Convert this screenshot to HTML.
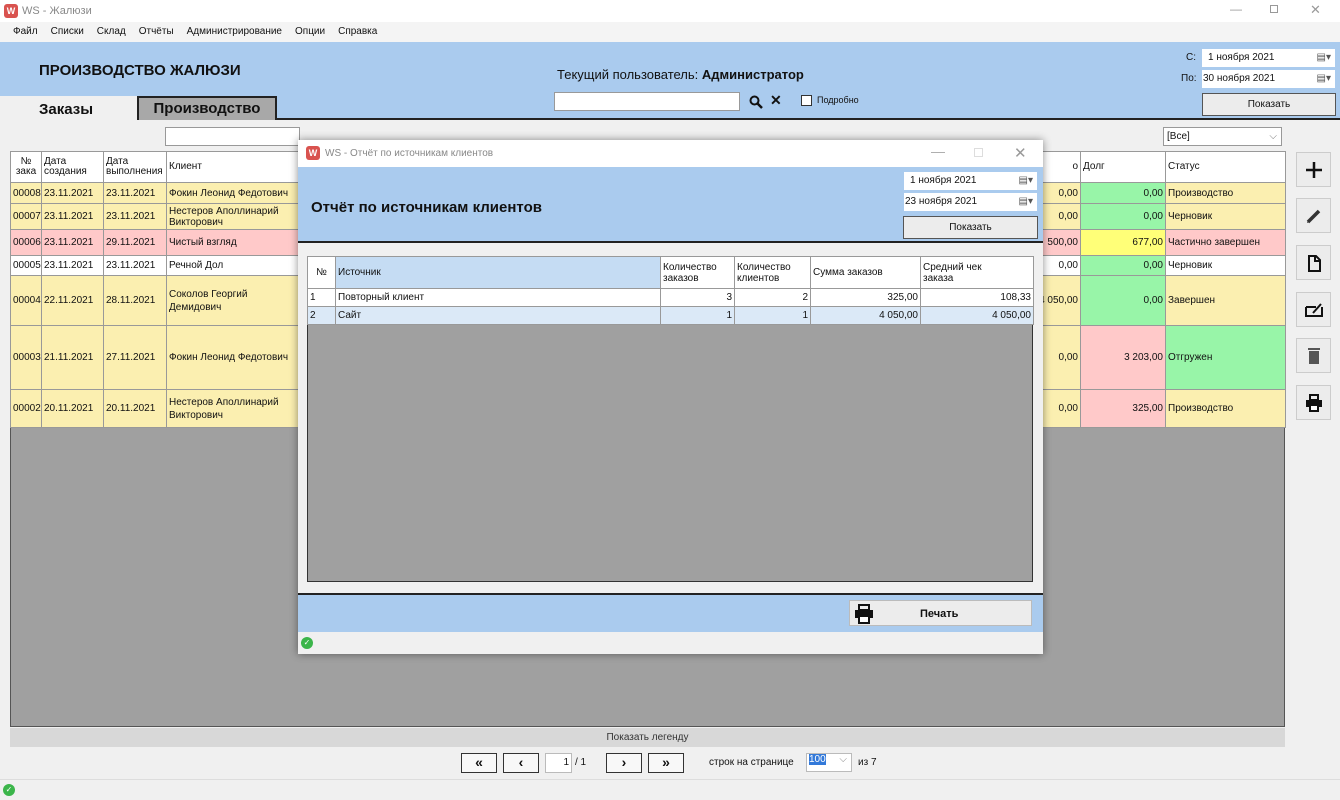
<!DOCTYPE html>
<html><head><meta charset="utf-8"><style>
*{box-sizing:border-box;margin:0;padding:0}
body{width:1340px;height:800px;position:relative;overflow:hidden;background:#f0f0f0;font-family:"Liberation Sans",sans-serif;font-size:11px;color:#111}
.a{position:absolute}
.title{left:0;top:0;width:1340px;height:22px;background:#fff}
.logo{width:14px;height:14px;background:#d9534f;border-radius:3px;color:#fff;font-size:9px;font-weight:bold;text-align:center;line-height:14px}
.menu{left:0;top:22px;width:1340px;height:20px;background:#f4f4f4;font-size:10px}
.menu span{margin-left:13px;line-height:20px}
.hdr{left:0;top:42px;width:1340px;height:78px;background:#aacbee;border-bottom:2px solid #222}
.date{background:#fff;height:18px;font-size:10px;line-height:18px;padding-left:6px}
.btn{background:#ececec;border:1px solid #555;text-align:center;font-size:11px}
table{border-collapse:collapse;table-layout:fixed}
td{border:1px solid #999;padding:0 2px;font-size:10px;overflow:hidden;white-space:nowrap}
.y{background:#fbefb0}.p{background:#ffc9c9}.g{background:#98f5a8}.w{background:#fff}.by{background:#ffff78}
.r{text-align:right}
.side{width:35px;height:35px;background:#ececec;border:1px solid #ccc;left:1296px}
.side svg{position:absolute;left:8px;top:8px}
.pg{height:20px;border:1px solid #333;background:#f8f8f8;text-align:center;font-weight:bold;font-size:14px;line-height:17px}
</style></head><body>
<div class="a title"><div class="a logo" style="left:4px;top:4px">W</div><span class="a" style="left:22px;top:5px;color:#888;font-size:11px">WS - Жалюзи</span>
<span class="a" style="left:1230px;top:2px;color:#999;font-size:12px">—</span><span class="a" style="left:1270px;top:5px;width:8px;height:8px;border:1px solid #999"></span><span class="a" style="left:1310px;top:2px;color:#999;font-size:13px">✕</span></div>
<div class="a menu"><span>Файл</span><span>Списки</span><span>Склад</span><span>Отчёты</span><span>Администрирование</span><span>Опции</span><span>Справка</span></div>
<div class="a hdr">
<div class="a" style="left:39px;top:20px;font-size:15px;font-weight:bold">ПРОИЗВОДСТВО ЖАЛЮЗИ</div>
<div class="a" style="left:557px;top:25px;font-size:13px">Текущий пользователь: <b>Администратор</b></div>
<div class="a" style="left:554px;top:50px;width:186px;height:19px;background:#fff;border:1px solid #999"></div>
<svg class="a" style="left:749px;top:53px" width="14" height="14"><circle cx="5.5" cy="5.5" r="4" fill="none" stroke="#111" stroke-width="2"/><path d="M8.5 8.5L13 13" stroke="#111" stroke-width="2.5"/></svg>
<div class="a" style="left:770px;top:50px;font-size:14px;font-weight:bold">✕</div>
<div class="a" style="left:801px;top:53px;width:11px;height:11px;background:#fff;border:1px solid #333"></div>
<div class="a" style="left:817px;top:53px;font-size:9px">Подробно</div>
<div class="a" style="left:1186px;top:10px;font-size:10px">С:</div>
<div class="a date" style="left:1202px;top:7px;width:133px">1 ноября 2021<span style="float:right;margin-right:4px;color:#555">▤▾</span></div>
<div class="a" style="left:1181px;top:31px;font-size:10px">По:</div>
<div class="a date" style="left:1202px;top:28px;width:133px;padding-left:1px">30 ноября 2021<span style="float:right;margin-right:4px;color:#555">▤▾</span></div>
<div class="a btn" style="left:1202px;top:51px;width:134px;height:23px;line-height:21px;font-size:10px">Показать</div>
<div class="a" style="left:0;top:54px;width:137px;height:24px;background:#f0f0f0;font-size:15px;font-weight:bold;padding-left:39px;line-height:28px">Заказы</div>
<div class="a" style="left:137px;top:54px;width:140px;height:24px;background:#a8a8a8;border:2px solid #222;border-bottom:none;font-size:15px;font-weight:bold;text-align:center;line-height:22px">Производство</div>
</div>
<div class="a" style="left:0;top:120px;width:137px;height:3px;background:#f0f0f0"></div>
<div class="a" style="left:165px;top:127px;width:135px;height:19px;background:#fff;border:1px solid #999"></div>
<div class="a" style="left:1163px;top:127px;width:119px;height:19px;background:#fff;border:1px solid #999;font-size:10px;line-height:17px;padding-left:3px">[Все]<span style="float:right;margin-right:4px;color:#777">⌵</span></div>
<div class="a" style="left:10px;top:151px;width:1275px;height:576px;background:#a0a0a0;border:1px solid #555"></div>
<table class="a" style="left:10px;top:151px;width:1275px">
<colgroup><col style="width:31px"><col style="width:62px"><col style="width:63px"><col style="width:132px"><col style="width:782px"><col style="width:85px"><col style="width:120px"></colgroup>
<tr class="w" style="height:31px;line-height:10px"><td style="text-align:center">№<br>зака</td><td>Дата<br>создания</td><td>Дата<br>выполнения</td><td>Клиент</td><td class="r">о</td><td>Долг</td><td>Статус</td></tr>
<tr class="y" style="height:21px"><td>00008</td><td>23.11.2021</td><td>23.11.2021</td><td>Фокин Леонид Федотович</td><td class="r">0,00</td><td class="r g">0,00</td><td>Производство</td></tr>
<tr class="y" style="height:26px;line-height:11px"><td>00007</td><td>23.11.2021</td><td>23.11.2021</td><td>Нестеров Аполлинарий<br>Викторович</td><td class="r">0,00</td><td class="r g">0,00</td><td>Черновик</td></tr>
<tr class="p" style="height:26px"><td>00006</td><td>23.11.2021</td><td>29.11.2021</td><td>Чистый взгляд</td><td class="r">500,00</td><td class="r by">677,00</td><td>Частично завершен</td></tr>
<tr class="w" style="height:20px"><td>00005</td><td>23.11.2021</td><td>23.11.2021</td><td>Речной Дол</td><td class="r">0,00</td><td class="r g">0,00</td><td>Черновик</td></tr>
<tr class="y" style="height:50px;line-height:13px"><td>00004</td><td>22.11.2021</td><td>28.11.2021</td><td>Соколов Георгий<br>Демидович</td><td class="r">4 050,00</td><td class="r g">0,00</td><td>Завершен</td></tr>
<tr class="y" style="height:64px"><td>00003</td><td>21.11.2021</td><td>27.11.2021</td><td>Фокин Леонид Федотович</td><td class="r">0,00</td><td class="r p">3 203,00</td><td class="g">Отгружен</td></tr>
<tr class="y" style="height:38px;line-height:13px"><td>00002</td><td>20.11.2021</td><td>20.11.2021</td><td>Нестеров Аполлинарий<br>Викторович</td><td class="r">0,00</td><td class="r p">325,00</td><td>Производство</td></tr>
</table>
<div class="a side" style="top:152px"><svg width="18" height="18"><path d="M9 1V17M1 9H17" stroke="#111" stroke-width="2.5"/></svg></div>
<div class="a side" style="top:198px"><svg width="18" height="18"><path d="M3 15L14 4" stroke="#333" stroke-width="3.5"/><path d="M2 16l1-3 2 2z" fill="#333"/></svg></div>
<div class="a side" style="top:245px"><svg width="18" height="18"><path d="M4 2h7l4 4v11H4z" fill="none" stroke="#111" stroke-width="2"/><path d="M10 2v5h5" fill="none" stroke="#111" stroke-width="2"/></svg></div>
<div class="a side" style="top:292px"><svg width="18" height="18"><path d="M1 6h10M1 6v9h16V6" fill="none" stroke="#111" stroke-width="2"/><path d="M8 12L16 3" stroke="#111" stroke-width="2"/></svg></div>
<div class="a side" style="top:338px"><svg width="18" height="18"><rect x="4" y="4" width="10" height="13" fill="#555"/><rect x="3" y="1" width="12" height="2" fill="#555"/></svg></div>
<div class="a side" style="top:385px"><svg width="18" height="18"><rect x="5" y="1" width="8" height="5" fill="none" stroke="#111" stroke-width="2"/><rect x="1" y="6" width="16" height="7" fill="#111"/><rect x="5" y="11" width="8" height="6" fill="#fff" stroke="#111" stroke-width="2"/></svg></div>
<div class="a" style="left:10px;top:728px;width:1275px;height:19px;background:#d8d8d8;text-align:center;font-size:10px;line-height:19px;color:#333">Показать легенду</div>
<div class="a pg" style="left:461px;top:753px;width:36px">«</div>
<div class="a pg" style="left:503px;top:753px;width:36px">‹</div>
<div class="a" style="left:545px;top:753px;width:27px;height:20px;background:#fff;border:1px solid #bbb;text-align:right;font-size:10px;line-height:18px;padding-right:2px">1</div>
<div class="a" style="left:575px;top:757px;font-size:10px">/ 1</div>
<div class="a pg" style="left:606px;top:753px;width:36px">›</div>
<div class="a pg" style="left:648px;top:753px;width:36px">»</div>
<div class="a" style="left:709px;top:757px;font-size:10px">строк на странице</div>
<div class="a" style="left:806px;top:753px;width:46px;height:19px;background:#fff;border:1px solid #bbb;font-size:10px"><span style="background:#3379d9;color:#fff;margin-left:2px">100</span><span style="float:right;margin-right:4px;color:#888">⌵</span></div>
<div class="a" style="left:858px;top:757px;font-size:10px">из 7</div>
<div class="a" style="left:0;top:779px;width:1340px;height:1px;background:#ddd"></div>
<div class="a" style="left:3px;top:784px;width:12px;height:12px;border-radius:50%;background:#3bb54a;color:#fff;font-size:8px;text-align:center;line-height:12px">✓</div>

<div class="a" style="left:298px;top:140px;width:745px;height:514px;background:#f0f0f0;box-shadow:0 0 8px rgba(0,0,0,.45)">
<div class="a" style="left:0;top:0;width:745px;height:27px;background:#fff"><div class="a logo" style="left:8px;top:6px">W</div><span class="a" style="left:27px;top:8px;color:#888;font-size:10px">WS - Отчёт по источникам клиентов</span>
<span class="a" style="left:633px;top:3px;color:#aaa;font-size:14px">—</span><span class="a" style="left:676px;top:8px;width:9px;height:9px;border:1px solid #ddd"></span><span class="a" style="left:716px;top:4px;color:#999;font-size:15px">✕</span></div>
<div class="a" style="left:0;top:27px;width:745px;height:76px;background:#aacbee;border-bottom:2px solid #222">
<div class="a" style="left:13px;top:32px;font-size:15px;font-weight:bold">Отчёт по источникам клиентов</div>
<div class="a date" style="left:606px;top:5px;width:133px">1 ноября 2021<span style="float:right;margin-right:4px;color:#555">▤▾</span></div>
<div class="a date" style="left:606px;top:26px;width:133px;padding-left:1px">23 ноября 2021<span style="float:right;margin-right:4px;color:#555">▤▾</span></div>
<div class="a btn" style="left:605px;top:49px;width:135px;height:23px;line-height:21px;font-size:10px">Показать</div>
</div>
<div class="a" style="left:9px;top:116px;width:726px;height:326px;background:#a0a0a0;border:1px solid #333"></div>
<table class="a" style="left:9px;top:116px;width:726px">
<colgroup><col style="width:28px"><col style="width:325px"><col style="width:74px"><col style="width:76px"><col style="width:110px"><col style="width:113px"></colgroup>
<tr class="w" style="height:32px;line-height:11px"><td style="text-align:center">№</td><td style="background:#c5dcf3">Источник</td><td>Количество<br>заказов</td><td>Количество<br>клиентов</td><td>Сумма заказов</td><td>Средний чек<br>заказа</td></tr>
<tr class="w" style="height:18px"><td>1</td><td>Повторный клиент</td><td class="r">3</td><td class="r">2</td><td class="r">325,00</td><td class="r">108,33</td></tr>
<tr style="height:18px;background:#dbe9f7"><td>2</td><td>Сайт</td><td class="r">1</td><td class="r">1</td><td class="r">4 050,00</td><td class="r">4 050,00</td></tr>
</table>
<div class="a" style="left:0;top:453px;width:745px;height:39px;background:#aacbee;border-top:2px solid #222">
<div class="a" style="left:551px;top:5px;width:183px;height:26px;background:#ececec;border:1px solid #bbb">
<svg class="a" style="left:4px;top:3px" width="20" height="20"><rect x="5" y="1" width="10" height="5" fill="none" stroke="#111" stroke-width="2"/><rect x="1" y="6" width="18" height="8" fill="#111"/><rect x="5" y="12" width="10" height="7" fill="#fff" stroke="#111" stroke-width="2"/></svg>
<span class="a" style="left:70px;top:7px;font-weight:bold;font-size:11px">Печать</span></div></div>
<div class="a" style="left:3px;top:497px;width:12px;height:12px;border-radius:50%;background:#3bb54a;color:#fff;font-size:8px;text-align:center;line-height:12px">✓</div>
</div>
</body></html>
